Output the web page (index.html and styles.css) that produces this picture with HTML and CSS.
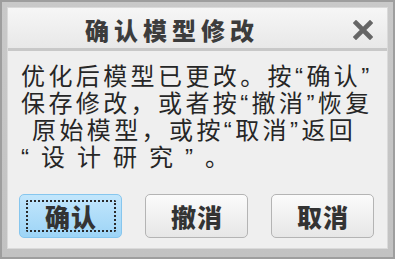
FILE: index.html
```html
<!DOCTYPE html>
<html lang="zh-CN">
<head>
<meta charset="utf-8">
<link rel="stylesheet" href="styles.css">
</head>
<body>
<div class="frame">
  <div class="window">
    <div class="titlebar">
      <div class="title">确认模型修改</div>
      <svg class="close" width="20" height="20" viewBox="0 0 20 20">
        <path d="M3 3 L17 17 M17 3 L3 17" stroke="#666" stroke-width="4.6" stroke-linecap="square"/>
      </svg>
    </div>
    <div class="content">
      <div class="message">
        <div class="line">优化后模型已更改。按“确认”</div>
        <div class="line">保存修改，或者按“撤消”恢复</div>
        <div class="line indent">原始模型，或按“取消”返回</div>
        <div class="line wide">“设计研究”。</div>
      </div>
      <div class="buttons">
        <button class="btn primary"><span>确认</span></button>
        <button class="btn"><span>撤消</span></button>
        <button class="btn"><span>取消</span></button>
      </div>
    </div>
  </div>
</div>
</body>
</html>
```

FILE: styles.css
```css
html, body {
  margin: 0;
  padding: 0;
  background: #c4c4c4;
}

.frame {
  width: 395px;
  height: 259px;
  box-sizing: border-box;
  background: linear-gradient(#c9c9c9, #c2c2c2);
  border: 2px solid #9e9e9e;
  padding: 6px 6px 9px 6px;
}

.window {
  height: 100%;
  display: flex;
  flex-direction: column;
  background: #efefef;
  box-shadow: 0 0 0 1px #dadada;
}

.titlebar {
  height: 40px;
  flex: none;
  display: flex;
  align-items: center;
  background: linear-gradient(#f6f6f6, #e8e8e8);
  border-bottom: 3px solid #c8c8c8;
  position: relative;
}

.title {
  padding-left: 77px;
  padding-top: 2px;
  font-family: "Noto Sans CJK SC", sans-serif;
  font-weight: 900;
  font-size: 24px;
  letter-spacing: 5px;
  color: #3c3c3c;
}

.close {
  margin-left: auto;
  margin-right: 14px;
  margin-top: 3px;
}

.content {
  flex: 1;
  display: flex;
  flex-direction: column;
  padding: 12px 0 10px 0;
}

.message {
  padding-left: 13px;
  font-family: "Liberation Sans", "Noto Sans CJK SC", sans-serif;
  font-size: 24px;
  line-height: 27px;
  letter-spacing: 3.4px;
  color: #262626;
}

.line {
  white-space: nowrap;
}

.indent {
  padding-left: 11px;
}

.wide {
  letter-spacing: 12px;
}

.buttons {
  margin-top: auto;
  display: flex;
  gap: 23px;
  padding-left: 11px;
}

.btn {
  width: 103px;
  height: 44px;
  box-sizing: border-box;
  border: 1px solid #b4b4b4;
  border-radius: 5px;
  background: linear-gradient(#fbfbfb, #e6e6e6);
  font-family: "Noto Sans CJK SC", sans-serif;
  font-weight: 900;
  font-size: 25px;
  letter-spacing: 1px;
  color: #333;
  padding: 0;
  display: flex;
  align-items: center;
  justify-content: center;
  position: relative;
}

.btn span {
  padding-left: 1px;
}

.primary {
  border-color: #86c6ee;
  background: linear-gradient(#c2e6fc, #9dd4f6);
}

.primary::after {
  content: "";
  position: absolute;
  left: 6px;
  right: 5px;
  top: 5px;
  bottom: 5px;
  border: 2px dotted #2a2a2a;
  border-radius: 2px;
}
```
